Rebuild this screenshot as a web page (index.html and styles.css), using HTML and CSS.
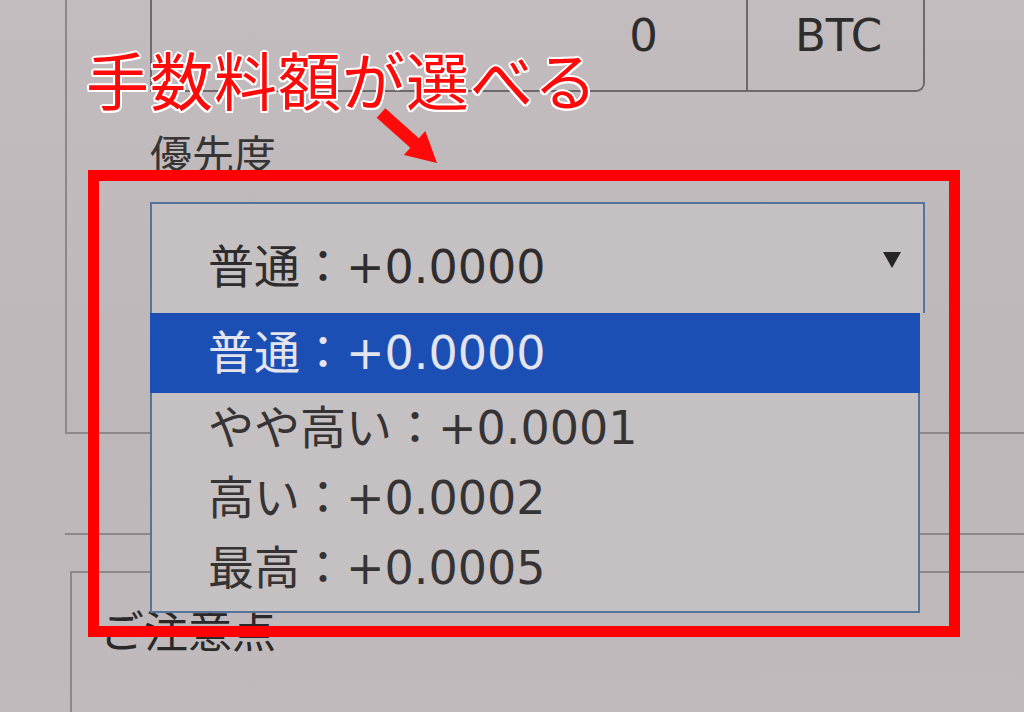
FILE: index.html
```html
<!DOCTYPE html>
<html lang="ja">
<head>
<meta charset="utf-8">
<title>優先度</title>
<link rel="stylesheet" href="styles.css">
</head>
<body>
<div class="page">
  <div class="panel">
    <div class="amount-row">
      <div class="amount-cell">0</div>
      <div class="unit-cell">BTC</div>
    </div>
    <div class="label">優先度</div>
    <div class="select">
      <span class="select-value">普通：+0.0000</span>
      <span class="caret"></span>
    </div>
  </div>
  <div class="strip"></div>
  <div class="notice">
    <div class="notice-title">ご注意点</div>
  </div>

  <ul class="options">
    <li class="option selected">普通：+0.0000</li>
    <li class="option">やや高い：+0.0001</li>
    <li class="option">高い：+0.0002</li>
    <li class="option">最高：+0.0005</li>
  </ul>

  <div class="callout">手数料額が選べる</div>
  <svg class="arrow" width="1024" height="712" viewBox="0 0 1024 712">
    <polygon fill="#ff0a0a" points="376.7,117.8 385.3,108.2 418.9,138.2 425.3,131 437,163 403.9,154.9 410.3,147.8"/>
  </svg>
  <div class="highlight-box"></div>
</div>
</body>
</html>
```

FILE: styles.css
```css
html, body {
  margin: 0;
  padding: 0;
}
body {
  background: #bfb9bb;
  font-family: "DejaVu Sans", "Noto Sans CJK JP", sans-serif;
  color: #2e2c2d;
}
.page {
  position: relative;
  width: 1024px;
  height: 712px;
  overflow: hidden;
  background: linear-gradient(180deg, #c2bcbe 0%, #bdb7b9 60%, #c0babc 100%);
}
.panel {
  margin-left: 65px;
  height: 432px;
  border-left: 2px solid #8d8789;
  border-bottom: 2px solid #8d8789;
  display: flex;
  flex-direction: column;
}
.amount-row {
  margin-left: 83px;
  width: 775px;
  height: 92px;
  box-sizing: border-box;
  display: flex;
  border: 2px solid #6e696b;
  border-top: none;
  border-bottom-right-radius: 9px;
  font-size: 45px;
  line-height: 52px;
}
.amount-cell {
  width: 596px;
  box-sizing: border-box;
  text-align: right;
  padding: 10px 88px 0 0;
  border-right: 2px solid #6e696b;
}
.unit-cell {
  flex: 1;
  text-align: center;
  padding: 10px 0 0 6px;
}
.label {
  margin: 36px 0 0 83px;
  font-family: "Noto Sans CJK JP", sans-serif;
  font-size: 42px;
  line-height: 50px;
  color: #363435;
}
.select {
  margin: 24px 0 0 83px;
  width: 775px;
  height: 111px;
  box-sizing: border-box;
  border: 2px solid #56739a;
  border-bottom: none;
  background: #c5c0c2;
  display: flex;
  align-items: center;
  justify-content: space-between;
  padding: 8px 22px 0 56px;
  font-size: 46px;
}
.caret {
  width: 0;
  height: 0;
  border-left: 9px solid transparent;
  border-right: 9px solid transparent;
  border-top: 16px solid #262425;
  margin-top: -6px;
}
.strip {
  margin-left: 65px;
  height: 99px;
  border-bottom: 2px solid #8d8789;
}
.notice {
  margin: 36px 0 0 70px;
  height: 200px;
  border-top: 2px solid #8d8789;
  border-left: 2px solid #8d8789;
  padding: 30px 0 0 28px;
}
.notice-title {
  font-family: "Noto Sans CJK JP", sans-serif;
  font-size: 44px;
  line-height: 52px;
  color: #2a2829;
}
.options {
  position: absolute;
  left: 150px;
  top: 313px;
  width: 770px;
  height: 300px;
  box-sizing: border-box;
  margin: 0;
  padding: 0 0 8px 0;
  list-style: none;
  border: 2px solid #56739a;
  border-top: none;
  background: #c5c0c2;
  font-size: 46px;
  color: #353334;
}
.option {
  height: 70px;
  box-sizing: border-box;
  display: flex;
  align-items: center;
  padding: 0 0 8px 56px;
}
.option.selected {
  height: 80px;
  background: #1c4fb4;
  color: #e4e4ee;
  margin: 0 -2px 0 -2px;
  padding-left: 58px;
}
.callout {
  position: absolute;
  left: 86px;
  top: 40px;
  font-family: "Noto Sans CJK JP", sans-serif;
  font-weight: 400;
  font-size: 63px;
  line-height: 76px;
  letter-spacing: 1px;
  color: #ff0a0a;
  text-shadow: 2px 0 0 #fff, -2px 0 0 #fff, 0 2px 0 #fff, 0 -2px 0 #fff,
    1.5px 1.5px 0 #fff, -1.5px 1.5px 0 #fff, 1.5px -1.5px 0 #fff, -1.5px -1.5px 0 #fff;
}
.arrow {
  position: absolute;
  left: 0;
  top: 0;
}
.highlight-box {
  position: absolute;
  left: 88px;
  top: 170px;
  width: 872px;
  height: 467px;
  box-sizing: border-box;
  border: 11px solid #ff0000;
}
```
